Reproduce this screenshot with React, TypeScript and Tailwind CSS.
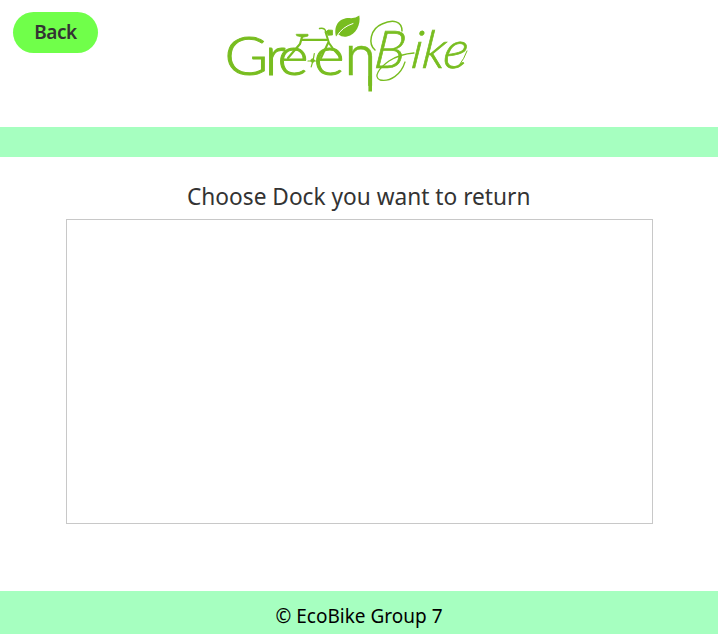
function Logo() {
  return (
    <svg viewBox="225 6 256 100" className="h-[100px] w-[256px] overflow-visible" role="img" aria-label="GreenBike" fill="none" stroke="#78bd20" strokeLinecap="round">
      <g fill="#78bd20">
        <text transform="translate(224.5 75) scale(1.1 1)" x="0 36.5 48.3 81" y="0" fontSize="54" fontFamily="Lato, sans-serif" fontWeight="300" strokeWidth="1">Gree</text>
        <text x="344.5" y="75" fontSize="52" fontFamily="Inter, sans-serif" fontWeight="300" textLength="32" lengthAdjust="spacingAndGlyphs" strokeWidth="0.3">η</text>
        <text transform="translate(373 68) skewX(-7)" x="0 37 48 69" y="0" fontSize="52" fontFamily="Lato, sans-serif" fontWeight="300" fontStyle="italic" strokeWidth="0.7">Bike</text>
      </g>
      {/* elongated tail of the n */}
      <path d="M370.2 76V91.5" strokeWidth="3.6" strokeLinecap="butt" />
      {/* frame, saddle, fork and pedals */}
      <path d="M302 37L300 44L288 58M301.5 39.8H327" strokeWidth="2.2" />
      <path d="M325.5 32L329 43L334 50L341 58M328.5 42L321 58" strokeWidth="2" />
      <path d="M296.5 34.3H308L308 36L303 37.2L297 35.8Z" fill="#78bd20" strokeWidth="0.8" />
      <path d="M319.5 28.5Q325 27.5 326 32" strokeWidth="1.4" />
      <path d="M326 32L328 30L332.5 30.2V35L328 35.3Z" fill="#78bd20" strokeWidth="0.8" />
      <path d="M308 61H317M314.3 53.5L313.2 60L311.2 66.8" strokeWidth="1.2" />
      <circle cx="312.6" cy="60.6" r="1.8" fill="#78bd20" strokeWidth="0.8" />
      {/* leaf */}
      <path d="M336 36.5C333 23 342 17 351 18.2Q356 18 359.3 15.5C361 24 356 35 347 36.5Q342 37.3 338.5 34.5Z" fill="#78bd20" stroke="none" />
      <path d="M337 36Q342 27 353 23.5" stroke="white" strokeWidth="1" />
      {/* script flourish around the capital */}
      <path d="M375 50C368 44 370 29 382 24C393 19 402 21 402 31" strokeWidth="1.5" />
      <path d="M405 62C401 75 390 82 380 80C373 77 379 68 389 61Q400 54 414 53" strokeWidth="1.3" />
      <path d="M460 64Q464 59 467 51" strokeWidth="1" />
    </svg>
  );
}

export default function App() {
  return (
    <div className="flex h-[634px] w-[718px] flex-col bg-white font-['Noto_Sans','Open_Sans',sans-serif] text-[#333]">
      <header className="flex h-[127px] items-start pt-3 pl-[13px]">
        <button className="h-[41px] w-[85px] rounded-full bg-[#70ff4a] text-[19px] leading-[41px] font-semibold tracking-[-0.5px]">Back</button>
        <div className="-mt-[6px] ml-[127px] flex"><Logo /></div>
      </header>
      <div className="h-[30px] bg-[#a6ffc0]" />
      <main className="flex flex-1 flex-col items-center pt-[21px]">
        <h1 className="h-[41px] scale-x-[0.945] text-[24px] leading-[36px] whitespace-nowrap">Choose Dock you want to return</h1>
        <div className="h-[305px] w-[587px] border border-[#c8c8c8]" />
      </main>
      <footer className="h-[43px] bg-[#a6ffc0] pt-[11px] text-center text-[19px] leading-7 text-black">© EcoBike Group 7</footer>
    </div>
  );
}
